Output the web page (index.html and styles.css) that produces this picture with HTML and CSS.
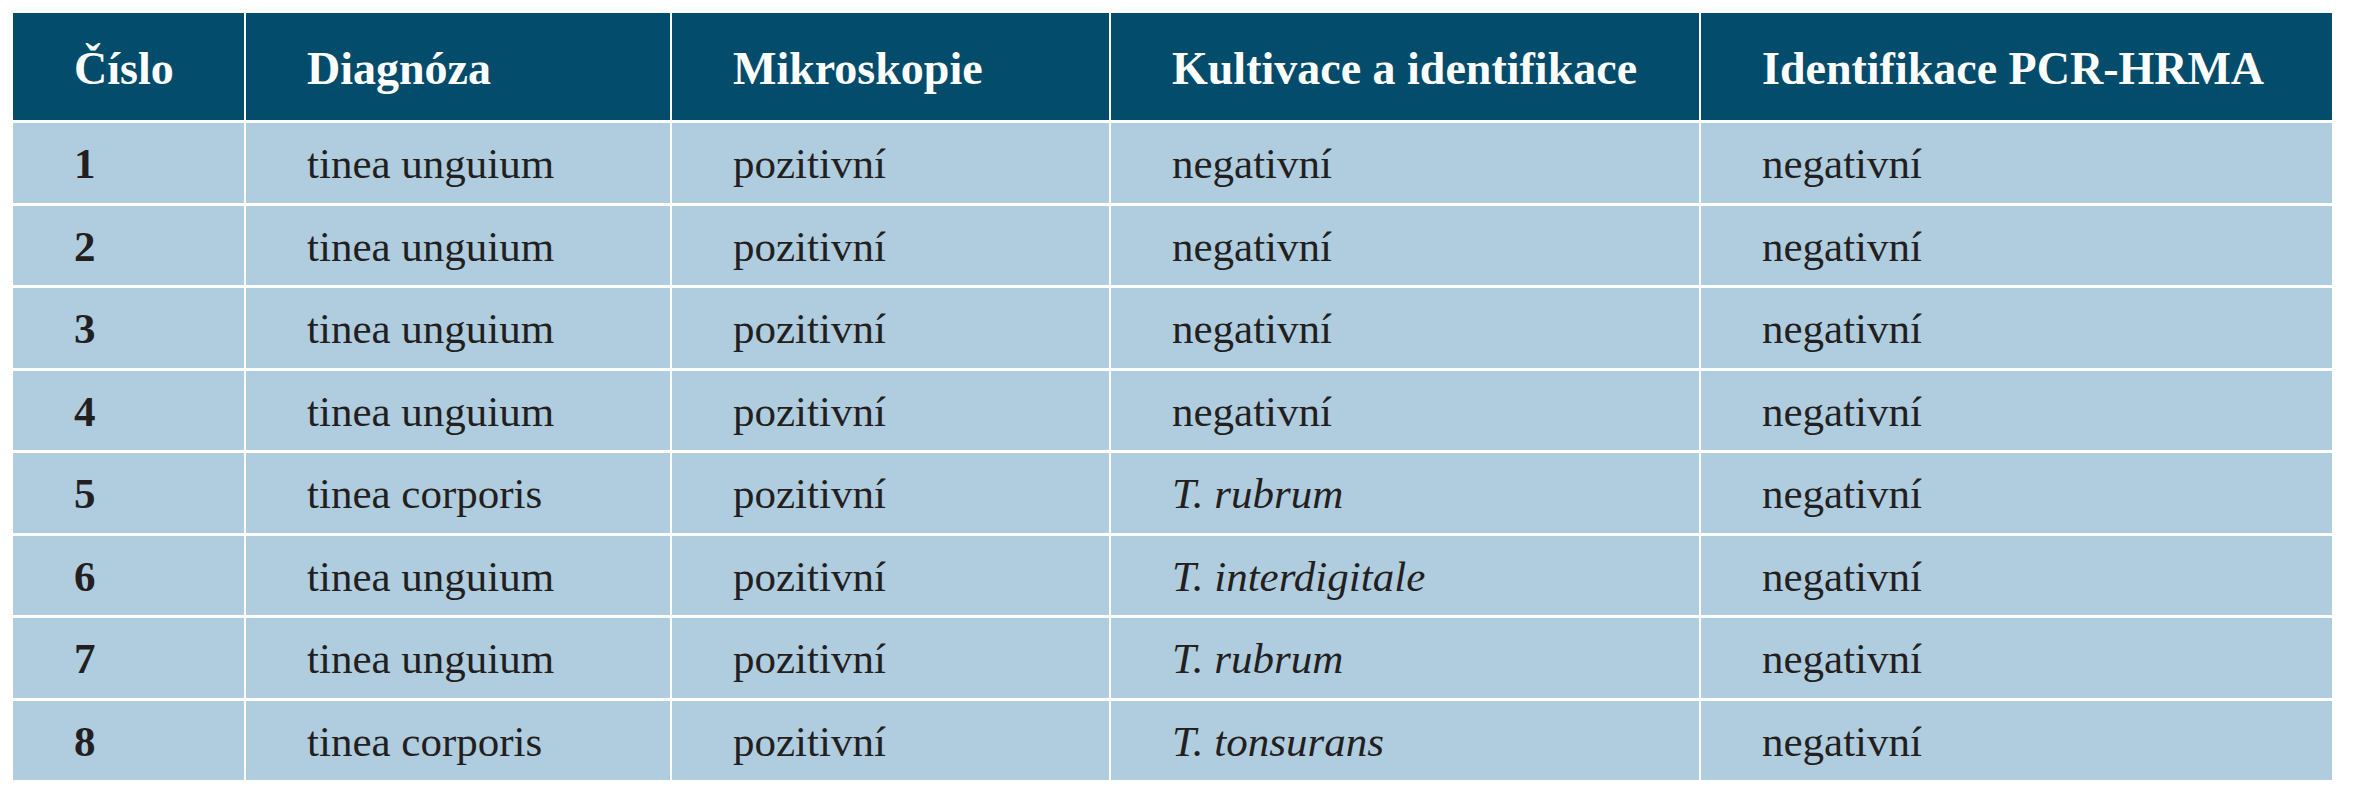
FILE: index.html
```html
<!DOCTYPE html>
<html lang="cs">
<head>
<meta charset="utf-8">
<title>Tabulka</title>
<link rel="stylesheet" href="styles.css">
</head>
<body>
<table class="results">
  <colgroup>
    <col class="c1"><col class="c2"><col class="c3"><col class="c4"><col class="c5">
  </colgroup>
  <thead>
    <tr>
      <th>Číslo</th><th>Diagnóza</th><th>Mikroskopie</th><th>Kultivace a identifikace</th><th>Identifikace PCR-HRMA</th>
    </tr>
  </thead>
  <tbody>
    <tr><td class="num">1</td><td>tinea unguium</td><td>pozitivní</td><td>negativní</td><td>negativní</td></tr>
    <tr><td class="num">2</td><td>tinea unguium</td><td>pozitivní</td><td>negativní</td><td>negativní</td></tr>
    <tr><td class="num">3</td><td>tinea unguium</td><td>pozitivní</td><td>negativní</td><td>negativní</td></tr>
    <tr><td class="num">4</td><td>tinea unguium</td><td>pozitivní</td><td>negativní</td><td>negativní</td></tr>
    <tr><td class="num">5</td><td>tinea corporis</td><td>pozitivní</td><td><i>T. rubrum</i></td><td>negativní</td></tr>
    <tr><td class="num">6</td><td>tinea unguium</td><td>pozitivní</td><td><i>T. interdigitale</i></td><td>negativní</td></tr>
    <tr><td class="num">7</td><td>tinea unguium</td><td>pozitivní</td><td><i>T. rubrum</i></td><td>negativní</td></tr>
    <tr><td class="num">8</td><td>tinea corporis</td><td>pozitivní</td><td><i>T. tonsurans</i></td><td>negativní</td></tr>
  </tbody>
</table>
</body>
</html>
```

FILE: styles.css
```css
html, body {
  margin: 0;
  padding: 0;
  background: #ffffff;
}

.results {
  margin: 10px 0 0 11px;
  border-collapse: separate;
  border-spacing: 2px 3px;
  table-layout: fixed;
  width: 2323px;
  font-family: "Liberation Serif", "DejaVu Serif", serif;
}

.c1 { width: 231px; }
.c2 { width: 424px; }
.c3 { width: 437px; }
.c4 { width: 588px; }
.c5 { width: 631px; }

.results th,
.results td {
  padding: 2px 0 0 61px;
  text-align: left;
  vertical-align: middle;
  line-height: 1;
  white-space: nowrap;
}

.results thead tr {
  height: 107px;
}

.results th {
  padding-top: 5px;
  background: #034c6b;
  color: #ffffff;
  font-weight: bold;
  font-size: 46px;
}

.results tbody tr {
  height: 79.5px;
}

.results td {
  background: #b0cddf;
  color: #231f20;
  font-size: 43px;
  font-weight: normal;
}

.results td.num {
  font-weight: bold;
}
```
